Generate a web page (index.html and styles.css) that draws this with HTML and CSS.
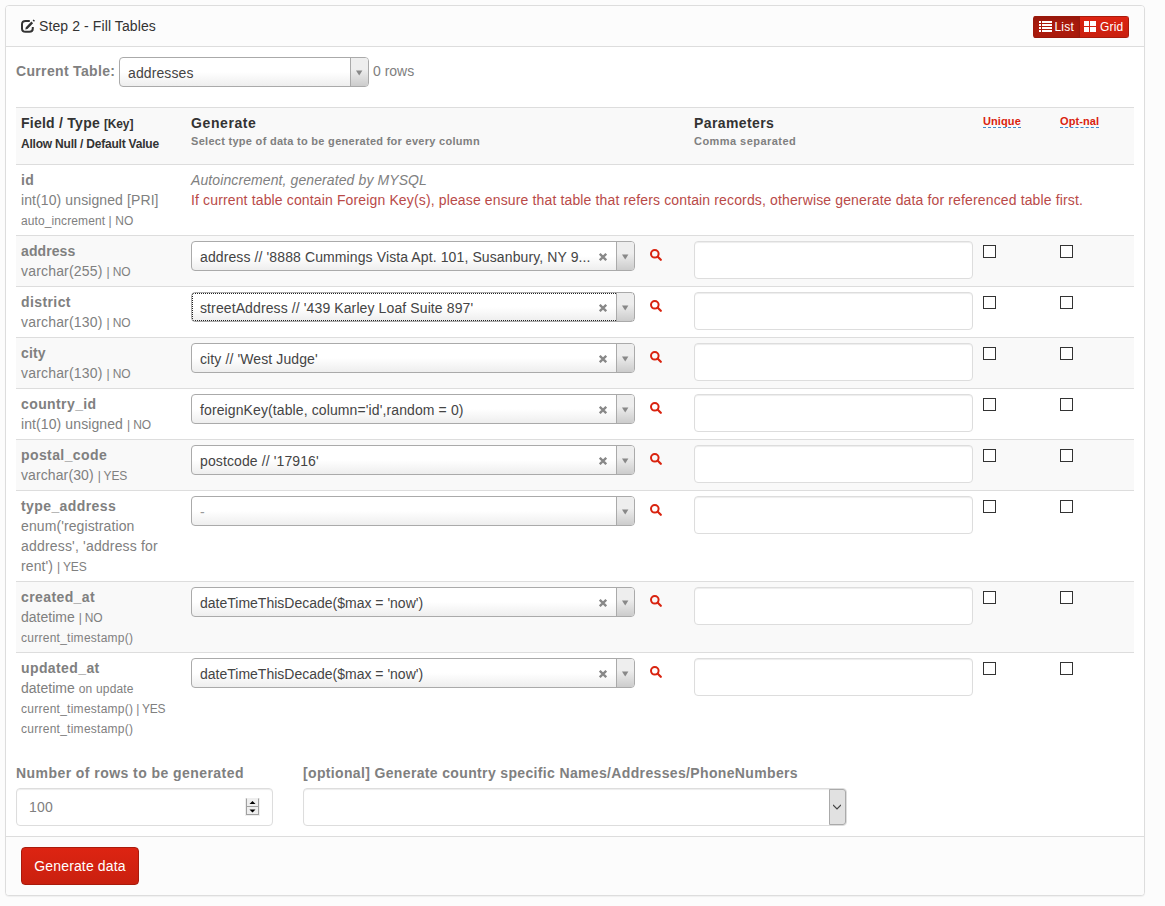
FILE: index.html
```html
<!DOCTYPE html>
<html lang="en">
<head>
<meta charset="utf-8">
<title>Step 2 - Fill Tables</title>
<link rel="stylesheet" href="styles.css">
</head>
<body>
<svg class="defs" width="0" height="0">
  <symbol id="search" viewBox="0 0 12 12"><circle cx="4.8" cy="4.8" r="3.8" fill="none" stroke="currentColor" stroke-width="2"/><path d="M7.8 7.8l3 3" stroke="currentColor" stroke-width="2.2" stroke-linecap="round"/></symbol>
  <symbol id="down" viewBox="0 0 7 6"><path d="M0 0.5h6.4L3.2 5.5z" fill="currentColor"/></symbol>
  <symbol id="clear" viewBox="0 0 8 8"><path d="M.8.8l6.4 6.4M7.2.8L.8 7.2" stroke="currentColor" stroke-width="2.3"/></symbol>
</svg>
<main class="panel">
  <header class="panel-heading">
    <svg class="edit" width="14" height="14" viewBox="0 0 14 14"><path d="M8.8 1.9H4.6Q1 1.9 1 5.2v4.2Q1 12.8 4.6 12.8h3.8q3.4 0 3.4-3.4V8" fill="none" stroke="currentColor" stroke-width="2"/><path d="M4.8 8.2L10.4 2.6l1.7 1.7L6.5 9.9 4.3 10.400zM11.600 1.400L12.600.400 14 1.800 13 2.800z" fill="currentColor"/></svg>
    <h1 class="title">Step 2 - Fill Tables</h1>
    <div class="toggle">
      <button class="toggle-btn active"><svg width="13" height="11" viewBox="0 0 13 11"><path d="M0 0h2v2H0zM3 0h10v2H3zM0 3h2v2H0zM3 3h10v2H3zM0 6h2v2H0zM3 6h10v2H3zM0 9h2v2H0zM3 9h10v2H3z" fill="#fff"/></svg><span class="list-t">List</span></button>
      <button class="toggle-btn"><svg width="12" height="11" viewBox="0 0 12 11"><path d="M0 0h5v5H0zM6 0h6v5H6zM0 6h5v5H0zM6 6h6v5H6z" fill="#fff"/></svg><span class="grid-t">Grid</span></button>
    </div>
  </header>
  <section class="panel-body">
    <div class="current">
      <b class="current-label">Current Table:</b>
      <div class="picker picker-table"><span class="value">addresses</span><span class="arrow"><svg width="7" height="6"><use href="#down"/></svg></span></div>
      <span class="count">0 rows</span>
    </div>
    <div class="table">
      <div class="row head">
        <div class="cell"><b class="h-field">Field / Type</b> <b class="h-key">[Key]</b><br><b class="h-null">Allow Null / Default Value</b></div>
        <div class="cell"><b class="h-gen">Generate</b><b class="hint">Select type of data to be generated for every column</b></div>
        <div class="cell"><b class="h-param">Parameters</b><b class="hint hint-param">Comma separated</b></div>
        <div class="cell"><a class="tip">Unique</a></div>
        <div class="cell"><a class="tip">Opt-nal</a></div>
      </div>
      <div class="row">
        <div class="cell"><b>id</b><br>int(10) unsigned [PRI]<br><small class="auto">auto_increment | NO</small></div>
        <div class="cell wide"><i>Autoincrement, generated by MYSQL</i><br><span class="warn">If current table contain Foreign Key(s), please ensure that table that refers contain records, otherwise generate data for referenced table first.</span></div>
      </div>
      <div class="row odd">
        <div class="cell"><b class="snug">address</b><br><span class="type">varchar(255)</span> <small>| NO</small></div>
        <div class="cell gen"><div class="picker"><span class="value">address // '8888 Cummings Vista Apt. 101, Susanbury, NY 9...</span><svg class="clear" width="8" height="8"><use href="#clear"/></svg><span class="arrow"><svg width="7" height="6"><use href="#down"/></svg></span></div><svg class="search" width="12" height="12"><use href="#search"/></svg></div>
        <div class="cell"><input class="field"></div><div class="cell"><span class="box"></span></div><div class="cell"><span class="box"></span></div>
      </div>
      <div class="row">
        <div class="cell"><b>district</b><br><span class="type">varchar(130)</span> <small>| NO</small></div>
        <div class="cell gen"><div class="picker focused"><span class="value">streetAddress // '439 Karley Loaf Suite 897'</span><svg class="clear" width="8" height="8"><use href="#clear"/></svg><span class="arrow"><svg width="7" height="6"><use href="#down"/></svg></span></div><svg class="search" width="12" height="12"><use href="#search"/></svg></div>
        <div class="cell"><input class="field"></div><div class="cell"><span class="box"></span></div><div class="cell"><span class="box"></span></div>
      </div>
      <div class="row odd">
        <div class="cell"><b class="snug">city</b><br><span class="type">varchar(130)</span> <small>| NO</small></div>
        <div class="cell gen"><div class="picker"><span class="value">city // 'West Judge'</span><svg class="clear" width="8" height="8"><use href="#clear"/></svg><span class="arrow"><svg width="7" height="6"><use href="#down"/></svg></span></div><svg class="search" width="12" height="12"><use href="#search"/></svg></div>
        <div class="cell"><input class="field"></div><div class="cell"><span class="box"></span></div><div class="cell"><span class="box"></span></div>
      </div>
      <div class="row">
        <div class="cell"><b>country_id</b><br>int(10) unsigned <small>| NO</small></div>
        <div class="cell gen"><div class="picker"><span class="value">foreignKey(table, column='id',random = 0)</span><svg class="clear" width="8" height="8"><use href="#clear"/></svg><span class="arrow"><svg width="7" height="6"><use href="#down"/></svg></span></div><svg class="search" width="12" height="12"><use href="#search"/></svg></div>
        <div class="cell"><input class="field"></div><div class="cell"><span class="box"></span></div><div class="cell"><span class="box"></span></div>
      </div>
      <div class="row odd">
        <div class="cell"><b>postal_code</b><br>varchar(30) <small>| YES</small></div>
        <div class="cell gen"><div class="picker"><span class="value">postcode // '17916'</span><svg class="clear" width="8" height="8"><use href="#clear"/></svg><span class="arrow"><svg width="7" height="6"><use href="#down"/></svg></span></div><svg class="search" width="12" height="12"><use href="#search"/></svg></div>
        <div class="cell"><input class="field"></div><div class="cell"><span class="box"></span></div><div class="cell"><span class="box"></span></div>
      </div>
      <div class="row">
        <div class="cell"><b>type_address</b><br>enum('registration<br><span class="type">address', 'address for</span><br>rent') <small>| YES</small></div>
        <div class="cell gen"><div class="picker"><span class="value empty">-</span><span class="arrow"><svg width="7" height="6"><use href="#down"/></svg></span></div><svg class="search" width="12" height="12"><use href="#search"/></svg></div>
        <div class="cell"><input class="field"></div><div class="cell"><span class="box"></span></div><div class="cell"><span class="box"></span></div>
      </div>
      <div class="row odd">
        <div class="cell"><b>created_at</b><br><span class="plain">datetime</span> <small>| NO<br><span class="stamp">current_timestamp()</span></small></div>
        <div class="cell gen"><div class="picker"><span class="value plain">dateTimeThisDecade($max = 'now')</span><svg class="clear" width="8" height="8"><use href="#clear"/></svg><span class="arrow"><svg width="7" height="6"><use href="#down"/></svg></span></div><svg class="search" width="12" height="12"><use href="#search"/></svg></div>
        <div class="cell"><input class="field"></div><div class="cell"><span class="box"></span></div><div class="cell"><span class="box"></span></div>
      </div>
      <div class="row">
        <div class="cell"><b>updated_at</b><br><span class="plain">datetime</span> <small><span class="type">on update</span><br><span class="stamp">current_timestamp()</span><span class="tight"> | YES</span><br><span class="stamp">current_timestamp()</span></small></div>
        <div class="cell gen"><div class="picker"><span class="value plain">dateTimeThisDecade($max = 'now')</span><svg class="clear" width="8" height="8"><use href="#clear"/></svg><span class="arrow"><svg width="7" height="6"><use href="#down"/></svg></span></div><svg class="search" width="12" height="12"><use href="#search"/></svg></div>
        <div class="cell"><input class="field"></div><div class="cell"><span class="box"></span></div><div class="cell"><span class="box"></span></div>
      </div>
    </div>
    <div class="options">
      <div class="option-rows"><b class="option-label rows-label">Number of rows to be generated</b>
        <div class="number"><span>100</span><svg width="15" height="18" viewBox="0 0 15 18"><path d="M0 0h15v18H0z" fill="#eee"/><path d="M1.5.5v16M13.5.5v16M1 8.5h13M1 16.5h13" stroke="#a0a0a0" fill="none"/><path d="M4.5 6h6l-3-3zM4.5 11.500h6l-3 3z" fill="#000"/></svg></div></div>
      <div class="option-locale"><b class="option-label">[optional] Generate country specific Names/Addresses/PhoneNumbers</b>
        <div class="select"><span class="select-btn"><svg width="8" height="6" viewBox="0 0 8 6"><path d="M0 .8L4 4.8 8 .8" fill="none" stroke="#444" stroke-width="1.2"/></svg></span></div></div>
    </div>
  </section>
  <footer class="panel-footer"><button class="submit">Generate data</button></footer>
</main>
</body>
</html>
```
FILE: styles.css
```css
* { box-sizing: border-box; }
body { margin: 0; padding: 5px; background: #fcfcfc; color: #808080; font: 14px/20px "Liberation Sans", Arial, sans-serif; }
.defs { position: absolute; }
svg { display: block; flex: none; }
small { font-size: 12px; line-height: 14px; letter-spacing: -.15px; }
.panel { width: 1140px; height: 891px; display: flex; flex-direction: column; border: 1px solid #ddd; border-radius: 4px; background: #fff; box-shadow: 0 1px 1px rgba(0,0,0,.05); overflow: hidden; }
.panel-heading { height: 41px; flex: none; display: flex; align-items: center; padding: 0 15px; background: #fcfcfc; border-bottom: 1px solid #ddd; color: #333; }
.edit { margin: 0 4px 1px 0; }
.title { margin: 0; font-size: 14px; font-weight: normal; letter-spacing: .1px; }
.toggle { display: flex; margin: 1px 0 0 auto; height: 22px; border-radius: 3px; overflow: hidden; }
.toggle-btn { width: 49px; padding: 0 0 0 4px; border: 1px solid #a91b0c; border-left: 0; display: flex; align-items: center; background: linear-gradient(#dd2412, #c9200f); color: #fff; font: 12px "Liberation Sans", Arial, sans-serif; letter-spacing: .2px; }
.toggle-btn.active { width: 47px; background: #ab1b0d; box-shadow: inset 0 3px 5px rgba(0,0,0,.13); border-color: #98180b; padding-left: 6px; }
.list-t { margin-left: 2.5px; }
.grid-t { margin-left: 4px; }
.panel-body { flex: 1; padding: 10px; }
.current { display: flex; height: 50px; white-space: nowrap; }
.current-label { width: 103px; padding-top: 4px; letter-spacing: .33px; }
.count { padding: 4px 0 0 4px; }
.picker { position: relative; width: 444px; height: 30px; flex: none; display: flex; align-items: center; border: 1px solid #aaa; border-radius: 4px; background: linear-gradient(#fff 50%, #eee); color: #444; overflow: hidden; }
.picker-table { width: 250px; }
.value { flex: 1; padding: 2px 0 0 8px; white-space: nowrap; letter-spacing: .11px; }
.value.empty { color: #999; }
.clear { color: #888; margin: 1px 9px 0 0; }
.arrow { position: relative; width: 18px; height: 28px; flex: none; padding: 1px 0 0 5px; display: flex; align-items: center; border-left: 1px solid #aaa; background: linear-gradient(#eee 40%, #ccc); color: #888; }
.focused::before { content: ""; position: absolute; inset: 0; border: 1px dotted #222; }
.row { display: grid; grid-template-columns: 170px 503px 289px 77px 79px; border-top: 1px solid #ddd; }
.head, .odd { background: #f9f9f9; }
.head { height: 57px; color: #333; }
.cell { padding: 5px; white-space: nowrap; min-width: 0; letter-spacing: .1px; }
.cell b { letter-spacing: .4px; }
.cell .snug { letter-spacing: .1px; }
.cell .plain { letter-spacing: 0; }
.type { letter-spacing: .18px; }
.auto { letter-spacing: .1px; }
.stamp { letter-spacing: .26px; }
.tight { letter-spacing: -.3px; }
.wide { grid-column: 2 / 6; }
.h-key, .h-null { font-size: 12px; line-height: 14px; }
.cell .h-field { letter-spacing: .25px; }
.cell .h-key { letter-spacing: -.15px; }
.cell .h-null { letter-spacing: -.21px; }
.h-gen, .h-param { display: block; }
.cell .h-gen { letter-spacing: .6px; }
.hint { display: block; font-size: 11px; line-height: 16px; color: #808080; }
.cell .hint { letter-spacing: .29px; }
.cell .hint-param { letter-spacing: .45px; }
.tip { display: block; width: fit-content; margin-top: 2px; font-weight: bold; font-size: 11px; line-height: 12px; color: #d9230f; border-bottom: 1px dashed #428bca; }
.warn { color: #b94a48; letter-spacing: .14px; }
.gen { display: flex; }
.search { margin: 8px 0 0 15px; color: #d9230f; }
.field { display: block; width: 279px; height: 38px; margin: 0; padding: 8px 12px; border: 1px solid #ddd; border-radius: 4px; background: #fff; box-shadow: inset 0 1px 1px rgba(0,0,0,.075); }
.row:not(.head) .cell:has(.field) { height: 50px; margin-bottom: -2px; }
.box { display: block; width: 13px; height: 13px; margin-top: 4px; border: 1px solid #333; background: #fff; }
.options { display: flex; gap: 30px; padding-top: 20px; }
.option-rows { width: 257px; }
.option-locale { width: 544px; }
.option-label { display: block; height: 25px; white-space: nowrap; letter-spacing: .35px; }
.rows-label { letter-spacing: .44px; }
.number { height: 38px; padding: 0 12px; display: flex; align-items: center; justify-content: space-between; border: 1px solid #ddd; border-radius: 4px; box-shadow: inset 0 1px 1px rgba(0,0,0,.075); letter-spacing: .25px; }
.select { height: 38px; display: flex; justify-content: flex-end; border: 1px solid #ddd; border-radius: 4px; box-shadow: inset 0 1px 1px rgba(0,0,0,.075); }
.select-btn { width: 17px; height: 36px; display: flex; align-items: center; padding-left: 3px; border: 1px solid #aaa; border-radius: 0 3px 3px 0; background: #e1e1e1; }
.panel-footer { height: 59px; flex: none; padding: 10px 15px; background: #fcfcfc; border-top: 1px solid #ddd; }
.submit { display: block; width: 118px; height: 38px; padding: 0; border: 1px solid #a91b0c; border-radius: 4px; background: linear-gradient(#dd2412, #c9200f); color: #fff; font: 14px "Liberation Sans", Arial, sans-serif; letter-spacing: .14px; white-space: nowrap; }
```
